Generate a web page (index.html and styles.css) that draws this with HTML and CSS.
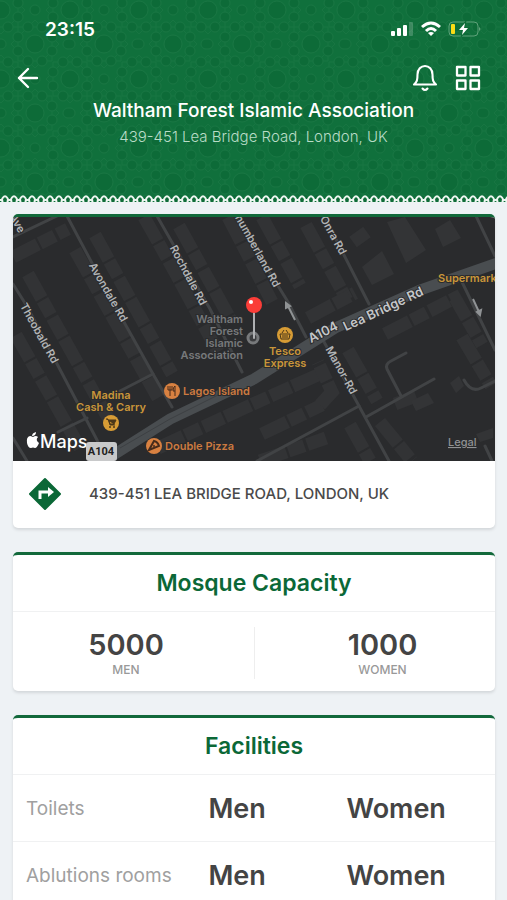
FILE: index.html
```html
<!DOCTYPE html>
<html lang="en">
<head>
    <meta charset="UTF-8">
    <meta name="viewport" content="width=device-width, initial-scale=1.0">
    <title>Waltham Forest Islamic Association</title>
    <link rel="stylesheet" href="styles.css">
</head>
<body>
    <header class="header">
        <svg class="pattern" aria-hidden="true">
            <defs>
                <g id="rosette" fill="#0d6b38" stroke="#187542" stroke-width="1">
                    <path d="M-24 0L0-24L24 0L0 24ZM-17-17H17V17H-17Z" fill="none"/>
                    <circle r="9"/>
                    <circle cx="17" cy="7" r="5"/><circle cx="7" cy="17" r="5"/>
                    <circle cx="-17" cy="7" r="5"/><circle cx="-7" cy="17" r="5"/>
                    <circle cx="17" cy="-7" r="5"/><circle cx="7" cy="-17" r="5"/>
                    <circle cx="-17" cy="-7" r="5"/><circle cx="-7" cy="-17" r="5"/>
                </g>
                <pattern id="stars" width="69" height="69" patternUnits="userSpaceOnUse">
                    <use href="#rosette" x="1" y="10"/>
                    <use href="#rosette" x="70" y="10"/>
                    <use href="#rosette" x="1" y="79"/>
                    <use href="#rosette" x="70" y="79"/>
                    <use href="#rosette" x="35" y="44"/>
                    <g fill="#0d6b38" stroke="#187542">
                        <circle cx="35" cy="10" r="5"/>
                        <circle cx="1" cy="44" r="5"/>
                        <circle cx="68" cy="44" r="5"/>
                    </g>
                </pattern>
                <pattern id="lace" width="9" height="8" patternUnits="userSpaceOnUse">
                    <rect y="7" width="9" height="1" fill="#eef2f5"/>
                    <path d="M0 5H2M8 5H9" stroke="#eef6f1" stroke-width="2"/>
                    <path d="M3 7Q1 5 3 2.500Q5 0 7 2.500Q9 5 7 7" fill="#0f6c38" stroke="#eef6f1" stroke-width="2"/>
                </pattern>
            </defs>
            <rect width="100%" height="100%" fill="url(#stars)"/>
        </svg>

        <div class="status">
            <span class="time">23:15</span>
            <svg width="90" height="16" viewBox="0 0 90 16" aria-hidden="true">
                <g fill="#fff">
                    <rect x="0" y="10" width="4" height="5" rx="1"/>
                    <rect x="6" y="7" width="4" height="8" rx="1"/>
                    <rect x="12" y="4" width="4" height="11" rx="1"/>
                    <rect x="18" y="1" width="4" height="14" rx="1" opacity=".2"/>
                </g>
                <g fill="none" stroke="#fff" stroke-width="3">
                    <path d="M31 6Q40-2 49 6"/>
                    <path d="M35 10Q40 5 45 10"/>
                </g>
                <path d="M37 12Q40 10 43 12L40 15Z" fill="#fff"/>
                <rect x="58" y="1" width="29" height="14" rx="4" fill="none" stroke="#5fa27a"/>
                <path d="M88 6Q91 8 88 10Z" fill="#5fa27a"/>
                <rect x="60" y="3" width="4" height="10" rx="1" fill="#fbdc16"/>
                <path d="M74 2L68 9H72L71 14L77 7H73Z" fill="#fff" stroke="#0f6c38" stroke-width="2" paint-order="stroke"/>
            </svg>
        </div>

        <nav class="bar">
            <button type="button" aria-label="Back">
                <svg width="22" height="22" viewBox="0 0 22 22"><path d="M20 11H2M11 2L2 11L11 20" stroke-width="2.4"/></svg>
            </button>
            <div class="actions">
                <button type="button" aria-label="Notifications">
                    <svg width="26" height="28" viewBox="0 0 26 28"><path d="M2 20.500H24C21 18 20.500 16 20.500 10.500C20.500 5 17 2 13 2S5.500 5 5.500 10.500C5.500 16 5 18 2 20.500ZM10.500 24.500Q13 27.500 15.500 24.500" stroke-width="2.100"/></svg>
                </button>
                <button type="button" aria-label="Menu">
                    <svg width="26" height="26" viewBox="0 0 26 26"><path d="M2 2H10.500V10.500H2ZM15.500 2H24V10.500H15.500ZM2 15.500H10.500V24H2ZM15.500 15.500H24V24H15.500Z" stroke-width="2.300"/></svg>
                </button>
            </div>
        </nav>

        <h1>Waltham Forest Islamic Association</h1>
        <p class="address">439-451 Lea Bridge Road, London, UK</p>
        <svg class="lace" aria-hidden="true"><rect width="100%" height="8" fill="url(#lace)"/></svg>
    </header>

    <main>
        <section class="card">
            <svg class="map" viewBox="13 217 482 244" preserveAspectRatio="xMidYMid slice" role="img" aria-label="Map">
                <rect x="13" y="217" width="482" height="244" fill="#2a2b2d"/>

                <!-- buildings -->
                <g class="blocks">
                    <path d="M13 257L68 229"/>
                    <path d="M28 274L58 328L112 425"/>
                    <path d="M75 250L104 302L158 398"/>
                    <path d="M16 335L80 448"/>
                    <path d="M95 235L122 284L172 374"/>
                    <path d="M144 217L176 274L218 352"/>
                    <path d="M179 226L232 322"/>
                    <path d="M228 217L272 302"/>
                    <path d="M262 217L300 286"/>
                    <path d="M306 225L347 300"/>
                    <path d="M308 318L355 293"/>
                    <path d="M385 334L455 298L482 345"/>
                    <path d="M158 448L253 404L320 374"/>
                    <path d="M262 434L322 405"/>
                    <path d="M320 405L332 392L318 362"/>
                    <path d="M348 350L377 401"/>
                    <path d="M380 422L412 461"/>
                    <path d="M350 425L370 461"/>
                    <path d="M260 461L326 438"/>
                    <path d="M462 337L491 386"/>
                    <path d="M353 242L367 232"/>
                    <path d="M395 404L416 396"/>
                </g>
                <path fill="#333436" d="M362 267L382 251L394 274L372 285ZM387 222L405 217L426 250L406 263ZM435 229L450 220L461 238L443 247ZM411 401L428 393L434 403L416 411ZM450 383L459 376L464 386L456 393ZM476 434L493 428V438L480 442Z"/>

                <!-- side streets -->
                <g class="streets">
                    <path d="M13 237L57 216"/>
                    <path d="M13 284L28 308L55 360L97 440L106 461"/>
                    <path d="M67 216L110 297L153 374L172 407"/>
                    <path d="M157 216L210 309L242 372"/>
                    <path d="M225 200L288 302L306 337"/>
                    <path d="M322 212L369 304"/>
                    <path d="M323 340L359 406L389 461"/>
                    <path d="M257 461L359 406M366 417L434 379"/>
                    <path d="M401 396L387 369Q385 364 391 361L406 353"/>
                    <path d="M464 380Q471 393 481 388L495 381"/>
                    <path d="M476 216L495 256M461 280L495 350"/>
                    <path d="M120 391L153 374M58 432L87 418M13 438L27 461"/>
                    <path d="M485 446L492 461"/>
                </g>
                <path class="road" d="M96 466L170 419L254 379L335 328L420 290L500 262"/>
                <path d="M120 448L170 419L220 394" fill="none" stroke="#3d4043" stroke-width="1"/>
                <g stroke="#8f9294" stroke-width="2" fill="#8f9294">
                    <path d="M295 320L288 306M286 308L286 303L290 306Z"/>
                    <path d="M473 299L479 312M477 312L481 310L480 315Z"/>
                </g>

                <!-- street names -->
                <g class="names">
                    <text transform="translate(14 225) rotate(62)" text-anchor="middle">Ave</text>
                    <text transform="translate(36 335) rotate(61)" text-anchor="middle">Theobald Rd</text>
                    <text transform="translate(105 294) rotate(60)" text-anchor="middle">Avondale Rd</text>
                    <text transform="translate(185 277) rotate(62)" text-anchor="middle">Rochdale Rd</text>
                    <text transform="translate(274 288) rotate(61)" text-anchor="end">Northumberland Rd</text>
                    <text transform="translate(330 237) rotate(61)" text-anchor="middle">Onra Rd</text>
                    <text transform="translate(338 372) rotate(61)" text-anchor="middle">Manor-Rd</text>
                </g>
                <g class="names main">
                    <text transform="translate(325 336) rotate(-27)" text-anchor="middle">A104</text>
                    <text transform="translate(385 313) rotate(-25)" text-anchor="middle">Lea Bridge Rd</text>
                </g>

                <!-- places -->
                <g class="place grey" text-anchor="end">
                    <text x="243" y="323">Waltham</text>
                    <text x="243" y="335">Forest</text>
                    <text x="243" y="347">Islamic</text>
                    <text x="243" y="359">Association</text>
                </g>
                <g class="place yellow" text-anchor="middle">
                    <text x="285" y="355">Tesco</text>
                    <text x="285" y="367">Express</text>
                    <text x="111" y="399">Madina</text>
                    <text x="111" y="411">Cash &amp; Carry</text>
                    <text x="438" y="282" text-anchor="start">Supermarket</text>
                </g>
                <g class="place orange">
                    <text x="183" y="395">Lagos Island</text>
                    <text x="165" y="450">Double Pizza</text>
                </g>
                <circle cx="285" cy="335" r="8" fill="#d79c35"/>
                <path d="M280 334H290L289 339H281ZM282 333L284 330M288 333L286 330M283 335V338M285 335V338M287 335V338" fill="none" stroke="#4a3719"/>
                <circle cx="111" cy="423" r="8" fill="#d79c35"/>
                <path d="M106 419H108L110 425H115M109 420H116L114 424H110Z" fill="#4a3719" stroke="#4a3719"/>
                <circle cx="110" cy="427" r="1" fill="#4a3719"/>
                <circle cx="114" cy="427" r="1" fill="#4a3719"/>
                <circle cx="172" cy="391" r="8" fill="#d88141"/>
                <path d="M170 386V396M168 386V390H172V386M175 396V386Q173 387 173 391H175" fill="none" stroke="#472b1b"/>
                <circle cx="154" cy="446" r="8" fill="#d88141"/>
                <path d="M149 450L154 441Q158 442 159 446Z" fill="none" stroke="#472b1b" stroke-width="2"/>
                <circle cx="154" cy="446" r="1" fill="#472b1b"/>

                <!-- pin -->
                <circle cx="253" cy="338" r="5" fill="#3c3d3f" stroke="#77797b" stroke-width="3"/>
                <path d="M254 312V338" stroke="#aeb0b2" stroke-width="2" stroke-linecap="round"/>
                <circle cx="254" cy="305" r="8" fill="#fb3d38"/>
                <circle cx="251" cy="302" r="2" fill="#fff"/>

                <!-- attribution -->
                <path fill="#fff" d="M33 437Q36 435 38 437Q35 440 39 443Q37 448 35 448Q33 447 31 448Q28 448 27 443Q26 437 30 436Q31 436 33 437ZM32 436Q32 433 36 432Q36 436 32 436Z"/>
                <text class="maps" x="40" y="448">Maps</text>
                <rect x="86" y="442" width="31" height="19" rx="3" fill="#c8c9ca"/>
                <text class="shield" x="101" y="455" text-anchor="middle">A104</text>
                <a href="#legal"><text class="legal" x="448" y="446">Legal</text></a>
            </svg>
            <a class="directions" href="#directions">
                <svg width="34" height="34" viewBox="0 0 34 34" aria-hidden="true">
                    <path d="M17 2L32 17L17 32L2 17Z" fill="#0b6837" stroke="#0b6837" stroke-width="2" stroke-linejoin="round"/>
                    <path d="M12 22V15H21" fill="none" stroke="#fff" stroke-width="3"/>
                    <path d="M20 10L26 15L20 20Z" fill="#fff"/>
                </svg>
                <span>439-451 LEA BRIDGE ROAD, LONDON, UK</span>
            </a>
        </section>

        <section class="card">
            <h2>Mosque Capacity</h2>
            <div class="capacity">
                <div class="count"><strong>5000</strong><span>MEN</span></div>
                <div class="count"><strong>1000</strong><span>WOMEN</span></div>
            </div>
        </section>

        <section class="card">
            <h2>Facilities</h2>
            <table>
                <tr>
                    <th scope="row">Toilets</th>
                    <td class="men">Men</td>
                    <td>Women</td>
                </tr>
                <tr>
                    <th scope="row">Ablutions rooms</th>
                    <td class="men">Men</td>
                    <td>Women</td>
                </tr>
            </table>
        </section>
    </main>
</body>
</html>
```
FILE: styles.css
```css
* {
    box-sizing: border-box;
}

body {
    margin: 0;
    height: 100vh;
    overflow: hidden;
    background-color: #eef2f5;
    color: #444;
    font-family: Inter, "Liberation Sans", sans-serif;
}

h1, h2, p {
    margin: 0;
}

/* header */

.header {
    position: relative;
    display: flex;
    flex-direction: column;
    height: 203px;
    background-color: #10703c;
    color: #fff;
    text-align: center;
}

.pattern {
    position: absolute;
    top: 0;
    left: 0;
    width: 100%;
    height: 100%;
}

.header > :not(.pattern) {
    position: relative;
}

.status {
    display: flex;
    justify-content: space-between;
    align-items: center;
    height: 58px;
    padding: 0 26px 0 45px;
}

.time {
    font-size: 19px;
    font-weight: 600;
}

.bar {
    display: flex;
    justify-content: space-between;
    align-items: center;
    height: 39px;
    padding: 0 26px 0 17px;
}

.actions {
    display: flex;
    gap: 17px;
}

button {
    display: flex;
    align-items: center;
    padding: 0;
    border: none;
    background: none;
}

button path {
    fill: none;
    stroke: #fff;
    stroke-linecap: round;
    stroke-linejoin: round;
}

h1 {
    font-size: 19px;
    font-weight: 500;
    line-height: 28px;
}

.address {
    color: #b9dcc7;
    font-size: 15px;
    font-weight: 300;
    line-height: 24px;
}

.lace {
    width: 100%;
    height: 8px;
    margin-top: auto;
}

/* cards */

main {
    display: flex;
    flex-direction: column;
    gap: 24px;
    padding: 11px 12px 24px 13px;
}

.card {
    overflow: hidden;
    flex-shrink: 0;
    border-top: 3px solid #12693b;
    border-radius: 5px;
    background-color: #fff;
    box-shadow: 0 2px 3px #d3d7da;
}

.map {
    display: block;
    width: 100%;
    height: 244px;
}

.directions {
    display: flex;
    align-items: center;
    gap: 27px;
    height: 67px;
    padding: 0 15px 2px;
    color: #4a4a4a;
    font-size: 15px;
    font-weight: 500;
    text-decoration: none;
}

h2 {
    height: 57px;
    border-bottom: 1px solid #f0f1f2;
    color: #0b6837;
    font-size: 23px;
    font-weight: 600;
    line-height: 56px;
    text-align: center;
}

.capacity {
    display: flex;
    padding: 15px 0 12px;
}

.count {
    display: flex;
    flex-direction: column;
    align-items: center;
    width: 50%;
    height: 52px;
    padding-right: 15px;
}

.count + .count {
    padding: 0 0 0 15px;
    border-left: 1px solid #eee;
}

.count strong {
    font-size: 29px;
    font-weight: 600;
    line-height: 36px;
}

.count span {
    color: #999;
    font-size: 12px;
    font-weight: 500;
    line-height: 14px;
}

table {
    width: 100%;
    table-layout: fixed;
    border-collapse: collapse;
}

tr {
    height: 66px;
    border-bottom: 1px solid #f0f1f2;
}

th {
    width: 34%;
    padding: 2px 0 0 13px;
    color: #a0a0a0;
    font-size: 19px;
    font-weight: 400;
    text-align: left;
    white-space: nowrap;
}

td {
    padding: 2px 0 0;
    font-size: 27px;
    font-weight: 600;
    text-align: center;
}

.men {
    width: 25%;
}

/* map */

.blocks {
    fill: none;
    stroke: #323335;
    stroke-width: 13px;
    stroke-dasharray: 28 2 17 3 22 2;
}

.streets {
    fill: none;
    stroke: #414345;
    stroke-width: 3px;
    stroke-linecap: round;
}

.road {
    fill: none;
    stroke: #494d50;
    stroke-width: 11px;
}

.names {
    fill: #b2b4b6;
    stroke: #2a2b2d;
    stroke-width: 2px;
    paint-order: stroke;
    font-size: 11px;
    font-weight: 600;
}

.main {
    fill: #c4c6c8;
    font-size: 13px;
}

.place {
    stroke: #2a2b2d;
    stroke-width: 2px;
    paint-order: stroke;
    font-size: 11px;
    font-weight: 600;
}

.grey {
    fill: #77797b;
}

.yellow {
    fill: #c9963a;
}

.orange {
    fill: #cc7a40;
}

.maps {
    fill: #fff;
    font-size: 18px;
    font-weight: 500;
}

.shield {
    fill: #222;
    font-family: Roboto, sans-serif;
    font-size: 11px;
    font-weight: 700;
}

.legal {
    fill: #909294;
    font-size: 11px;
    font-weight: 500;
    text-decoration: underline;
}
```
